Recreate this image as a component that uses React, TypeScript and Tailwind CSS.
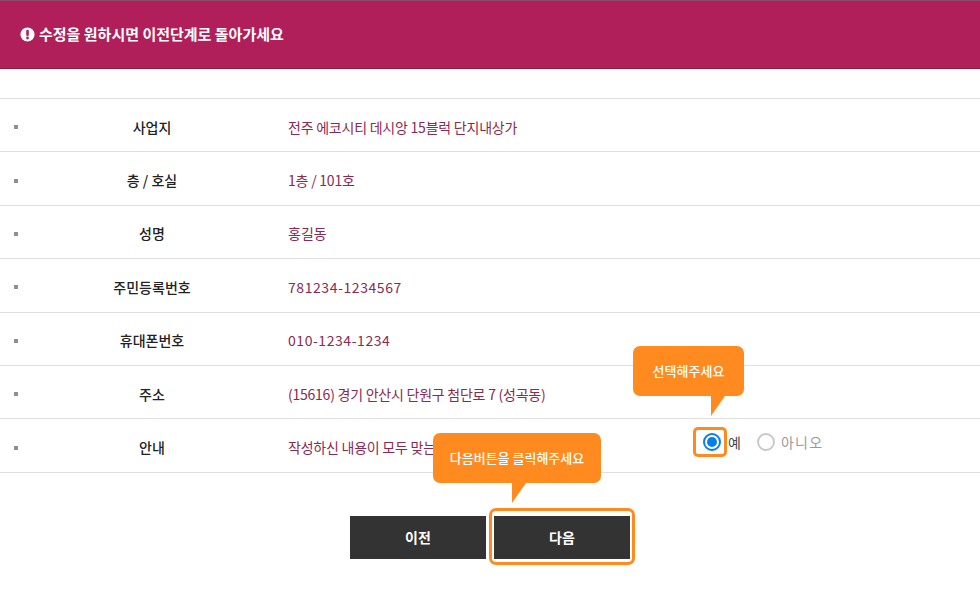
const rows = [
  { label: "사업지", value: "전주 에코시티 데시앙 15블럭 단지내상가", spacing: "tracking-[-0.23px]" },
  { label: "층 / 호실", value: "1층 / 101호", spacing: "tracking-[-0.22px]" },
  { label: "성명", value: "홍길동", spacing: "" },
  { label: "주민등록번호", value: "781234-1234567", spacing: "tracking-[0.57px]" },
  { label: "휴대폰번호", value: "010-1234-1234", spacing: "tracking-[0.55px]" },
  { label: "주소", value: "(15616) 경기 안산시 단원구 첨단로 7 (성곡동)", spacing: "tracking-[-0.24px]" },
];

function Row({ label, spacing, children }: { label: string; spacing?: string; children: React.ReactNode }) {
  return (
    <div className="flex h-[53.4px] items-center border-b border-[#dedede] pt-1">
      <span className="ml-[14px] h-1 w-1 bg-[#8f8f8f]" />
      <div className="w-[270px] pr-[2px] text-center text-[14px] font-medium text-[#222]">{label}</div>
      <div className={`text-[14px] text-[#8a2a52] ${spacing ?? ""}`}>{children}</div>
    </div>
  );
}

export default function App() {
  return (
    <div className="relative h-[609px] w-[980px] overflow-hidden bg-white font-['Noto_Sans_CJK_KR',sans-serif]">
      <div className="flex h-[69px] items-center gap-1 border-t border-b border-t-[#8e4a66] border-b-[#8e1a49] bg-[#b01f5a] pl-5 text-[15px] font-bold text-white">
        <svg viewBox="0 0 16 16" className="h-[15px] w-[15px]">
          <circle cx="8" cy="8" r="7.5" fill="#fff" />
          <rect x="6.6" y="3" width="2.8" height="6.6" rx="1.2" fill="#b01f5a" />
          <circle cx="8" cy="11.7" r="1.5" fill="#b01f5a" />
        </svg>
        수정을 원하시면 이전단계로 돌아가세요
      </div>

      <div className="mt-[29px] border-t border-[#dedede]">
        {rows.map((row) => (
          <Row key={row.label} label={row.label} spacing={row.spacing}>
            {row.value}
          </Row>
        ))}
        <Row label="안내" spacing="tracking-[-0.23px]">작성하신 내용이 모두 맞는지 확인해주세요</Row>
      </div>

      <div className="mt-[43px] flex justify-center gap-2">
        <button className="h-[43px] w-[136px] bg-[#333] text-[14px] font-bold text-white">이전</button>
        <button className="h-[43px] w-[136px] bg-[#333] text-[14px] font-bold text-white">다음</button>
      </div>

      {/* radios */}
      <div className="absolute left-[693px] top-[427px] flex h-[30px] items-center text-[14px]">
        <div className="flex h-[30px] w-[34px] items-center justify-center rounded-[5px] border-[3px] border-[#ff8a1f] pl-1">
          <span className="flex h-[18px] w-[18px] items-center justify-center rounded-full border-2 border-[#0a7ee8]">
            <span className="h-[10px] w-[10px] rounded-full bg-[#0a7ee8]" />
          </span>
        </div>
        <span className="ml-[1px] text-[#444]">예</span>
        <span className="ml-[16px] h-[18px] w-[18px] rounded-full border-2 border-[#c9c9c9]" />
        <span className="ml-[6px] tracking-[1.3px] text-[#999]">아니오</span>
      </div>

      {/* callouts */}
      <div className="absolute left-[633px] top-[346px] flex h-[50px] w-[111px] items-center justify-center rounded-[7px] bg-[#ff8a1f] pb-[1px] text-[13px] font-medium text-white">
        선택해주세요
        <span className="absolute left-[78px] top-[50px] h-0 w-0 border-r-[14px] border-t-[20px] border-r-transparent border-t-[#ff8a1f]" />
      </div>
      <div className="absolute left-[433px] top-[433px] flex h-[50px] w-[168px] items-center justify-center rounded-[7px] bg-[#ff8a1f] pb-[1px] text-[13px] font-medium text-white">
        다음버튼을 클릭해주세요
        <span className="absolute left-[79px] top-[50px] h-0 w-0 border-r-[14px] border-t-[20px] border-r-transparent border-t-[#ff8a1f]" />
      </div>

      {/* next button highlight */}
      <div className="absolute left-[489px] top-[508px] h-[57px] w-[146px] rounded-[7px] border-[3px] border-[#ff8a1f]" />
    </div>
  );
}
